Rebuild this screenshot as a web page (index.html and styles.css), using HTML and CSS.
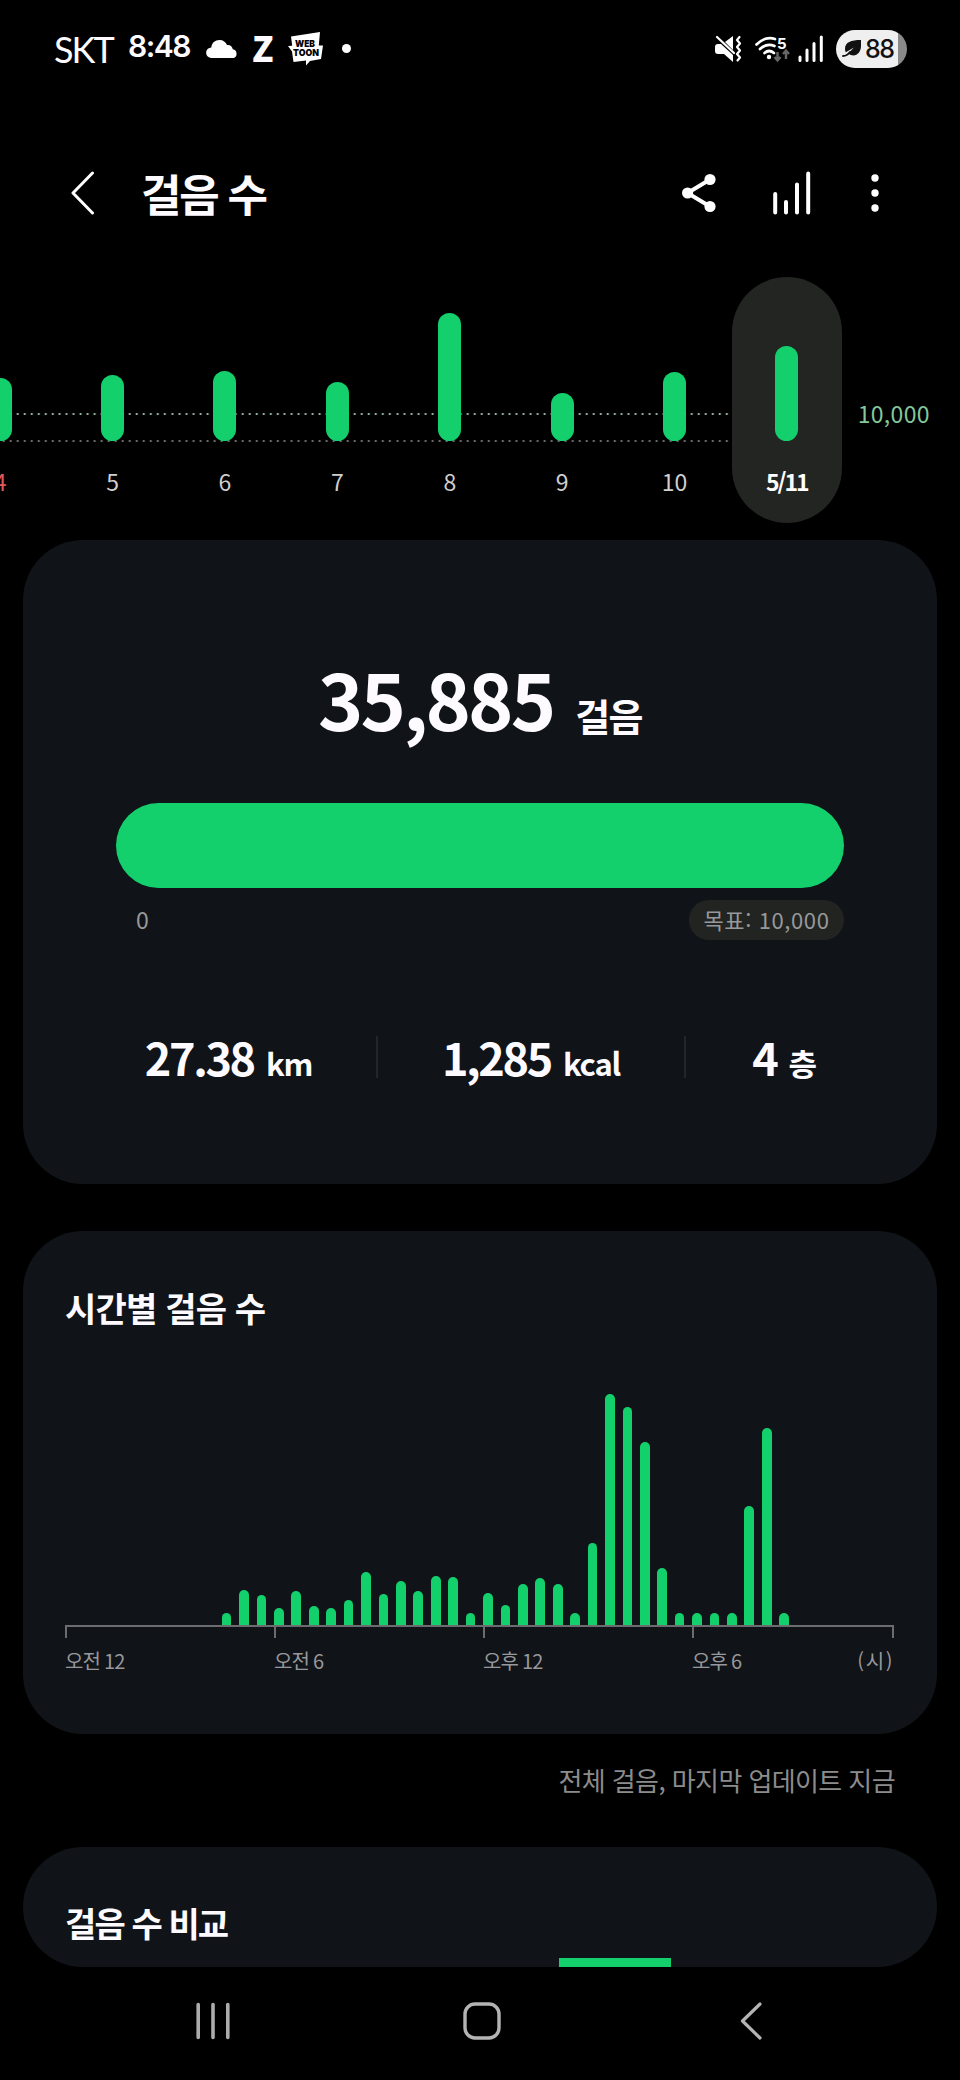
FILE: index.html
```
<!DOCTYPE html>
<html lang="ko">
<head>
    <meta charset="UTF-8">
    <meta name="viewport" content="width=device-width, initial-scale=1.0">
    <title>걸음 수</title>
    <link rel="stylesheet" href="styles.css">
</head>
<body>

<div class="status-bar">
    <div class="status-left">
        <span class="carrier">SKT</span>
        <span class="clock">8:48</span>
        <svg class="cloud" width="32" height="18" viewBox="0 0 32 18"><path d="M5.500 18a5.300 5.300 0 0 1-.2-10.600C5.800 3 9 0 13.500 0c3.700 0 6.300 2 7.500 5 3-.5 5.500 1.500 5.800 4.300A4.500 4.500 0 0 1 27.500 18z" fill="#fff"/></svg>
        <span class="z-logo">Z</span>
        <svg class="webtoon" width="35" height="34" viewBox="0 0 35 34">
            <path d="M3 4.500L32 0l-1.200 13.500H35L33 27l-11 2-4 4.500V28.500L5.500 30 4 19.500 0 14l4.200-.3z" fill="#fff"/>
            <text x="7" y="15" textLength="20" lengthAdjust="spacingAndGlyphs">WEB</text>
            <text x="5" y="23.500" textLength="26" lengthAdjust="spacingAndGlyphs">TOON</text>
        </svg>
        <span class="dot"></span>
    </div>
    <div class="status-right">
        <svg class="mute" width="27" height="28" viewBox="0 0 27 28">
            <path d="M0 12q0-3 3-3h3L18 20v7L9 19H3q-3 0-3-3zM10 7l8-6v14z" fill="#fff"/>
            <path d="M2 2l17 16" stroke="#fff" stroke-width="2.200" stroke-linecap="round"/>
            <path d="M24.500 2l-2.500 3 3 3.500-3 3.500 3 3.500-3 3.500 3 3.500-2.500 3" fill="none" stroke="#fff" stroke-width="2.200" stroke-linecap="round" stroke-linejoin="round"/>
        </svg>
        <svg class="wifi" width="36" height="28" viewBox="0 0 36 28">
            <g fill="none" stroke="#fff" stroke-width="2.700" stroke-linecap="round">
                <path d="M1.500 9.500Q10 1 20 4"/>
                <path d="M5 14q7-6.500 14.500-3"/>
                <path d="M9.500 18q4.500-4 9.500 0"/>
            </g>
            <circle cx="14" cy="22" r="2.200" fill="#fff"/>
            <text x="22" y="14">5</text>
            <path d="M22.500 17v8m-3-3l3 3.500 3-3.500M31 24v-8m-3 3l3-3.500 3 3.500" fill="none" stroke="#666" stroke-width="2.400"/>
        </svg>
        <svg class="signal" width="26" height="28" viewBox="0 0 26 28">
            <path d="M2 22v3.500M9 15v10.500M16 8.500v17M23.300 2v23.500" stroke="#fff" stroke-width="3" stroke-linecap="round"/>
        </svg>
        <div class="battery">
            <svg width="20" height="18" viewBox="0 0 20 18"><path d="M19 0C9 0 3 2 3 9q0 2 .8 3.200L12 7.500 6 13.500C13 18.500 19 13 19 6z" fill="#111"/><path d="M1 16q4 0 7-4" fill="none" stroke="#111" stroke-width="1.800" stroke-linecap="round"/></svg>
            <span>88</span>
        </div>
    </div>
</div>

<header class="app-bar">
    <svg class="back" width="24" height="44" viewBox="0 0 24 44"><path d="M21.500 2L2 22l19.500 20" fill="none" stroke="#fff" stroke-width="3" stroke-linecap="round" stroke-linejoin="round"/></svg>
    <h1>걸음 수</h1>
    <svg class="share" width="34" height="40" viewBox="0 0 34 40">
        <path d="M28 6.500L5.500 20 28 33.500" fill="none" stroke="#fff" stroke-width="4"/>
        <circle cx="28" cy="6.500" r="5.600" fill="#fff"/><circle cx="5.600" cy="20" r="5.600" fill="#fff"/><circle cx="28" cy="33.500" r="5.600" fill="#fff"/>
    </svg>
    <svg class="trend" width="38" height="44" viewBox="0 0 38 44"><path d="M2.200 23v18.500M13 31v10.500M24 13.500v28M35.200 2.500v39" stroke="#fff" stroke-width="4" stroke-linecap="round"/></svg>
    <svg class="more" width="8" height="38" viewBox="0 0 8 38"><g fill="#fff"><circle cx="4" cy="4" r="3.700"/><circle cx="4" cy="19" r="3.700"/><circle cx="4" cy="34" r="3.700"/></g></svg>
</header>

<div class="days">
    <div class="day sunday"><div class="day-plot"><i style="height: 63px"></i></div><span>4</span></div>
    <div class="day"><div class="day-plot"><i style="height: 66px"></i></div><span>5</span></div>
    <div class="day"><div class="day-plot"><i style="height: 70px"></i></div><span>6</span></div>
    <div class="day"><div class="day-plot"><i style="height: 59px"></i></div><span>7</span></div>
    <div class="day"><div class="day-plot"><i style="height: 128px"></i></div><span>8</span></div>
    <div class="day"><div class="day-plot"><i style="height: 48px"></i></div><span>9</span></div>
    <div class="day"><div class="day-plot"><i style="height: 69px"></i></div><span>10</span></div>
    <div class="day selected"><div class="day-plot"><i style="height: 95px"></i></div><span>5/11</span></div>
    <div class="goal-label">10,000</div>
</div>

<section class="card summary">
    <div class="total">35,885 <small>걸음</small></div>
    <div class="progress"></div>
    <div class="scale">
        <span class="zero">0</span>
        <span class="goal">목표: 10,000</span>
    </div>
    <div class="stats">
        <div class="stat">27.38 <small>km</small></div>
        <div class="stat">1,285 <small>kcal</small></div>
        <div class="stat">4 <small>층</small></div>
    </div>
</section>

<section class="card hourly">
    <h2>시간별 걸음 수</h2>
    <div class="bars" id="bars"></div>
    <div class="axis">
        <span></span><span></span><span></span><span></span>
    </div>
    <div class="hours">
        <span>오전 12</span><span>오전 6</span><span>오후 12</span><span>오후 6</span><span class="unit">(시)</span>
    </div>
</section>

<p class="updated">전체 걸음, 마지막 업데이트 지금</p>

<section class="card compare">
    <h2>걸음 수 비교</h2>
    <div class="compare-bar"></div>
</section>

<nav class="nav-bar">
    <svg class="recents" width="34" height="38" viewBox="0 0 34 38"><path d="M2.200 2.500v33M17 2.500v33M31.800 2.500v33" stroke="#acacac" stroke-width="3.600" stroke-linecap="round"/></svg>
    <svg class="home" width="38" height="38" viewBox="0 0 38 38"><rect x="2" y="2" width="34" height="34" rx="10" fill="none" stroke="#b4b4b4" stroke-width="3.400"/></svg>
    <svg class="nav-back" width="22" height="38" viewBox="0 0 22 38"><path d="M20 2L2.500 19 20 36" fill="none" stroke="#b4b4b4" stroke-width="3.200" stroke-linecap="round" stroke-linejoin="round"/></svg>
</nav>

<script>
    // one value per half hour, in px
    const steps = [
        0, 0, 0, 0, 0, 0, 0, 0, 0, 12, 35, 30, 17, 34, 19, 17,
        25, 53, 31, 44, 34, 49, 48, 12, 32, 20, 41, 47, 41, 12, 82, 231,
        218, 183, 57, 12, 12, 12, 12, 119, 197, 12, 0, 0, 0, 0, 0, 0
    ];
    const bars = document.getElementById('bars');
    steps.forEach(function (value) {
        const bar = document.createElement('i');
        bar.style.height = value + 'px';
        bars.appendChild(bar);
    });
</script>

</body>
</html>
```
FILE: styles.css
```
* {
    box-sizing: border-box;
}
body {
    margin: 0;
    width: 960px;
    height: 2080px;
    overflow: hidden;
    background-color: #000;
    color: #fdfbff;
    font-family: "Noto Sans CJK KR", sans-serif;
    display: flex;
    flex-direction: column;
}
svg {
    display: block;
    flex: none;
}
h1, h2, p {
    margin: 0;
    white-space: nowrap;
}

/* Status bar */
.status-bar {
    height: 97px;
    padding: 0 53px 0 54px;
    display: flex;
    justify-content: space-between;
    align-items: center;
}
.status-left,
.status-right {
    display: flex;
    align-items: center;
}
.carrier {
    width: 74px;
    font: 400 36px/40px Lato, sans-serif;
    letter-spacing: -2px;
}
.clock {
    width: 78px;
    margin-top: -5px;
    font: 600 30px/40px Inter, sans-serif;
    letter-spacing: -1.5px;
}
.z-logo {
    width: 20px;
    margin: -3px 0 0 14px;
    font: 900 35px/36px "Noto Sans CJK KR", sans-serif;
}
.webtoon {
    margin-left: 16px;
}
.webtoon text {
    font: 900 9px Inter, sans-serif;
    fill: #000;
}
.dot {
    width: 9px;
    height: 9px;
    margin-left: 19px;
    border-radius: 50%;
    background-color: #fff;
}
.wifi {
    margin-left: 13px;
}
.wifi text {
    font: 700 15px Inter, sans-serif;
    fill: #fff;
}
.signal {
    margin-left: 7px;
}
.battery {
    width: 71px;
    height: 38px;
    margin-left: 12px;
    padding-left: 6px;
    border-radius: 19px;
    background: linear-gradient(to right, #efefef 62px, #8a8a8a 62px);
    display: flex;
    align-items: center;
    color: #111;
    font: 500 25px/38px Inter, sans-serif;
    letter-spacing: -1.5px;
}
.battery span {
    margin-left: 3px;
}

/* App bar */
.app-bar {
    height: 180px;
    padding: 12px 81px 0 71px;
    display: flex;
    align-items: center;
}
.app-bar h1 {
    margin-left: 46px;
    margin-right: auto;
    font-size: 44px;
    line-height: 60px;
    letter-spacing: -2.3px;
}
.trend {
    margin-left: 57px;
}
.more {
    margin-left: 60px;
}

/* Daily strip, each column is centred on its bar */
.days {
    height: 246px;
    margin-left: -56px;
    display: flex;
}
.day {
    width: 112.4px;
    flex: none;
    text-align: center;
    font-size: 23px;
    line-height: 30px;
    color: #cfcfcf;
}
.day-plot {
    height: 165px;
    display: flex;
    justify-content: center;
    align-items: flex-end;
    padding-bottom: 1px;
    background:
        radial-gradient(circle, #8fae9b 1px, transparent 1.500px) 0 134px / 7.025px 6px repeat-x,
        radial-gradient(circle, #6c6c6c 1px, transparent 1.500px) 0 161px / 7.025px 6px repeat-x;
}
.day-plot i {
    width: 23px;
    border-radius: 12px;
    background-color: #13d06d;
}
.day span {
    display: block;
    margin-top: 24px;
}
.sunday span {
    color: #e2595c;
}
.selected {
    width: 110px;
    margin-left: 1px;
    border-radius: 55px;
    background-color: #232522;
    color: #fff;
    font-weight: 700;
    font-size: 23px;
    letter-spacing: -2px;
}
.selected .day-plot {
    background: none;
}
.goal-label {
    margin: 121px 0 0 16px;
    font-size: 23px;
    line-height: 30px;
    letter-spacing: 0.3px;
    color: #83c79b;
}

/* Cards */
.card {
    width: 914px;
    flex: none;
    margin-left: 23px;
    border-radius: 60px;
    background-color: #101318;
}
.card h2 {
    font-size: 34px;
    line-height: 50px;
    letter-spacing: -0.8px;
}
.summary {
    height: 644px;
    margin-top: 17px;
    padding: 102px 93px 0;
}
.total {
    height: 161px;
    text-align: center;
    font-size: 77px;
    line-height: 112px;
    font-weight: 700;
    letter-spacing: -2.8px;
    white-space: nowrap;
}
.total small {
    margin-left: 3px;
    font-size: 38px;
    letter-spacing: -1.5px;
}
.progress {
    height: 85px;
    border-radius: 43px;
    background-color: #13d06d;
}
.scale {
    margin-top: 12px;
    padding-left: 20px;
    display: flex;
    justify-content: space-between;
    align-items: center;
    font-size: 22px;
    color: #97989b;
}
.zero {
    margin-top: -2px;
    font-size: 23px;
}
.goal {
    width: 155px;
    height: 40px;
    border-radius: 20px;
    background-color: #222422;
    line-height: 38px;
    text-align: center;
    letter-spacing: 0.6px;
}
.stats {
    width: 801px;
    margin: 96px 0 0 -35px;
    display: grid;
    grid-template-columns: 295px 308px 198px;
}
.stat {
    height: 42px;
    text-align: center;
    font-size: 45px;
    line-height: 42px;
    font-weight: 700;
    letter-spacing: -2.4px;
    white-space: nowrap;
}
.stat + .stat {
    border-left: 2px solid #22252a;
}
.stat small {
    margin-left: 2px;
    font-size: 31px;
    letter-spacing: -1.2px;
}

.hourly {
    height: 503px;
    margin-top: 47px;
    padding: 52px 43px 0 42px;
}
.bars {
    height: 292px;
    display: flex;
    justify-content: space-between;
    align-items: flex-end;
}
.bars i {
    width: 9.700px;
    border-radius: 5px 5px 0 0;
    background-color: #13d06d;
}
.axis {
    height: 13px;
    border-top: 2px solid #6a6c70;
    border-right: 2px solid #6a6c70;
    display: flex;
}
.axis span {
    width: 209px;
    flex: none;
    border-left: 2px solid #6a6c70;
}
.axis span:last-child {
    width: 190px;
}
.hours {
    margin-top: 8px;
    display: grid;
    grid-template-columns: 209px 209px 209px 1fr auto;
    font-size: 20px;
    line-height: 30px;
    color: #97989b;
    letter-spacing: -0.8px;
    word-spacing: -1px;
}
.unit {
    letter-spacing: 1.6px;
}
.updated {
    height: 113px;
    padding: 26px 65px 0 0;
    flex: none;
    text-align: right;
    font-size: 26px;
    line-height: 40px;
    letter-spacing: -0.6px;
    color: #8c8c8c;
}
.compare {
    height: 120px;
    padding: 51px 42px 0;
    overflow: hidden;
}
.compare h2 {
    letter-spacing: -1.9px;
}
.compare-bar {
    width: 112px;
    height: 9px;
    margin: 10px 0 0 494px;
    background-color: #13d06d;
}

/* Navigation */
.nav-bar {
    height: 112px;
    padding: 0 198px 4px 196px;
    display: flex;
    align-items: center;
}
.home {
    margin-left: 233px;
}
.nav-back {
    margin-left: auto;
}
```
